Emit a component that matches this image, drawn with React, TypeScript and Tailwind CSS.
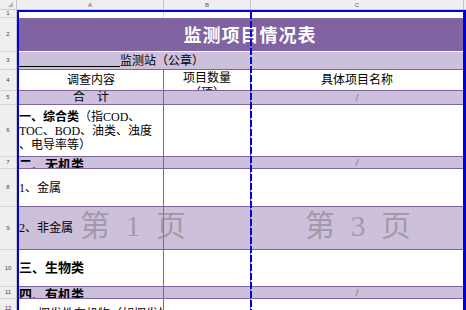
import React from "react";

const font = "font-['Liberation_Serif','Noto_Sans_CJK_SC',serif]";

type Row = {
  h: string;
  bg: string;
  a?: React.ReactNode;
  b?: React.ReactNode;
  c?: React.ReactNode;
  aClass?: string;
};

const slash = <span className="text-[11px] leading-[11px] text-[#555]">/</span>;

const rows: Row[] = [
  {
    h: "h-[21px]",
    bg: "bg-white",
    a: <span className="leading-[14px]">调查内容</span>,
    b: (
      <div className="flex h-full flex-col items-center pt-[1px] leading-[15px]">
        <span>项目数量</span>
        <span>（项）</span>
      </div>
    ),
    c: <span className="leading-[14px]">具体项目名称</span>,
    aClass: "justify-center",
  },
  {
    h: "h-[14px]",
    bg: "bg-[#ccc0da]",
    a: <span className="leading-[13px]">合　计</span>,
    c: slash,
    aClass: "justify-center",
  },
  {
    h: "h-[52px]",
    bg: "bg-white",
    a: (
      <div className="whitespace-nowrap leading-[14px]">
        <b>一、综合类</b>（指COD、
        <br />
        TOC、BOD、油类、浊度
        <br />
        、电导率等）
      </div>
    ),
  },
  {
    h: "h-[12px]",
    bg: "bg-[#ccc0da]",
    a: <b className="self-start pt-[1px] text-[13px] leading-[13px]">二、无机类</b>,
    c: slash,
  },
  { h: "h-[38px]", bg: "bg-white", a: <span>1、金属</span> },
  { h: "h-[43px]", bg: "bg-[#ccc0da]", a: <span>2、非金属</span> },
  {
    h: "h-[37px]",
    bg: "bg-white",
    a: <b className="text-[13px] leading-[14px]">三、生物类</b>,
  },
  {
    h: "h-[12px]",
    bg: "bg-[#ccc0da]",
    a: <b className="self-start pt-[1px] text-[13px] leading-[13px]">四、有机类</b>,
    c: slash,
  },
];

const headerRows = [
  { n: 1, h: "h-[8px]" },
  { n: 2, h: "h-[34px]" },
  { n: 3, h: "h-[18px]" },
  { n: 4, h: "h-[21px]" },
  { n: 5, h: "h-[14px]" },
  { n: 6, h: "h-[52px]" },
  { n: 7, h: "h-[12px]" },
  { n: 8, h: "h-[38px]" },
  { n: 9, h: "h-[43px]" },
  { n: 10, h: "h-[37px]" },
  { n: 11, h: "h-[12px]" },
  { n: 12, h: "h-[20px]" },
];

function PageMark({ n }: { n: number }) {
  return (
    <span className="whitespace-nowrap text-[30px] leading-[30px] text-[#8f8a96]/70 [word-spacing:8px]">
      第 {n} 页
    </span>
  );
}

export default function App() {
  return (
    <div className={`relative h-[310px] w-[466px] overflow-hidden bg-white text-[12px] text-black ${font}`}>
      {/* column header */}
      <div className="flex h-[10px] border-b border-[#c8c8c8] bg-[#efefef] font-['Liberation_Sans',sans-serif] text-[6px] leading-[10px] text-[#555]">
        <div className="relative w-[17px] border-r border-[#c8c8c8]">
          <div className="absolute right-[3px] bottom-[2px] h-0 w-0 border-b-[5px] border-l-[5px] border-b-[#b4b4b4] border-l-transparent" />
        </div>
        <div className="w-[147px] border-r border-[#c8c8c8] text-center">A</div>
        <div className="w-[87px] border-r border-[#c8c8c8] text-center">B</div>
        <div className="w-[213px] border-r border-[#c8c8c8] text-center">C</div>
        <div className="flex-1" />
      </div>

      <div className="flex">
        {/* row headers */}
        <div className="w-[17px] shrink-0 border-r border-[#c8c8c8] bg-[#efefef] font-['Liberation_Sans',sans-serif] text-[6px] text-[#3b3b6b]">
          {headerRows.map((r) => (
            <div
              key={r.n}
              className={`${r.h} flex items-center justify-center border-b border-[#d4d4d4]`}
            >
              {r.n}
            </div>
          ))}
        </div>

        {/* print area */}
        <div className="relative flex-1 border-t-2 border-r-[3px] border-l-2 border-[#0000d8]">
          {/* row 1 */}
          <div className="flex h-[6px]">
            <div className="w-[145px] border-r border-[#d4d4d4]" />
          </div>
          {/* row 2 title */}
          <div className="flex h-[34px] items-center justify-center border-b border-white bg-[#8064a2] pt-[3px] pl-[18px]">
            <span className="text-[18px] font-bold tracking-[1px] text-white">监测项目情况表</span>
          </div>
          {/* row 3 */}
          <div className="flex h-[18px] items-center border-b border-[#8064a2] bg-[#ccc0da]">
            <div className="mb-[2px] h-px w-[101px] shrink-0 self-end bg-black" />
            <span className="leading-[14px]">监测站（公章）</span>
          </div>

          {rows.map((r, i) => (
            <div key={i} className={`flex ${r.h} border-b border-[#8064a2] ${r.bg}`}>
              <div
                className={`flex w-[145px] items-center overflow-hidden border-r border-[#8064a2] ${r.aClass ?? ""}`}
              >
                {r.a}
              </div>
              <div className="flex w-[87px] items-start justify-center overflow-hidden border-r border-[#8064a2]">
                {r.b}
              </div>
              <div className="flex flex-1 items-center justify-center overflow-hidden">{r.c}</div>
            </div>
          ))}

          {/* row 12 */}
          <div className="flex h-[20px] bg-white">
            <div className="w-[145px] overflow-hidden whitespace-nowrap border-r border-[#8064a2] pt-[8px] pl-[1px] leading-[14px]">
              1、挥发性有机物（如挥发性卤代烃、苯系物等）
            </div>
            <div className="w-[87px] border-r border-[#8064a2]" />
          </div>

          {/* page marks */}
          <div className="absolute top-[199px] left-[61px]">
            <PageMark n={1} />
          </div>
          <div className="absolute top-[199px] left-[286px]">
            <PageMark n={3} />
          </div>

          {/* page break */}
          <div className="absolute top-0 bottom-0 left-[231px] w-[2px] bg-[repeating-linear-gradient(to_bottom,#0000d8_0px,#0000d8_7px,transparent_7px,transparent_9px)]" />
        </div>
      </div>
    </div>
  );
}
